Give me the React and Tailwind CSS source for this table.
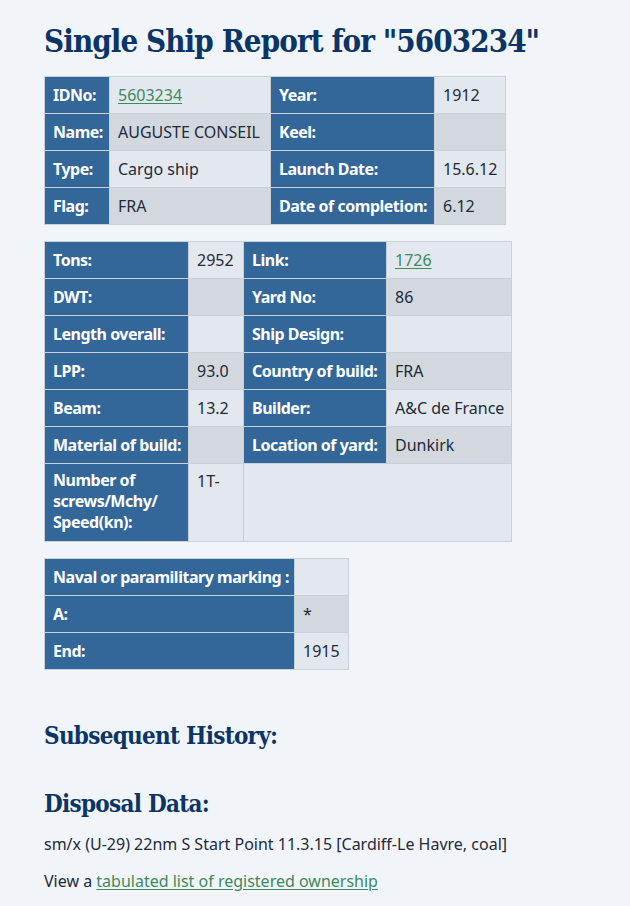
import React from "react";

const serif = { fontFamily: '"DejaVu Serif", serif', fontStretch: "condensed" };

function Th({ children, className = "" }) {
  return (
    <td className={`bg-[#336699] text-white font-bold tracking-[-0.03em] pl-2 pr-1 align-middle border border-[#c8d0da] whitespace-nowrap ${className}`}>
      {children}
    </td>
  );
}
function Td({ children, dark, className = "" }) {
  return (
    <td className={`${dark ? "bg-[#d3d8de]" : "bg-[#e3e8ee]"} text-[#1d2b3a] pl-2 pr-1 align-middle border border-[#c8d0da] whitespace-nowrap ${className}`}>
      {children}
    </td>
  );
}
const Link = ({ children }) => (
  <a href="#" className="text-[#3d8a5c] underline underline-offset-2">{children}</a>
);

export default function App() {
  return (
    <div className="min-h-[906px] bg-[#f1f4f8] px-[44px] pt-[21px] text-[16px] text-[#1d2b3a]" style={{ fontFamily: '"Noto Sans", sans-serif' }}>
      <h1 className="text-[31px] font-bold tracking-[-0.03em] text-[#0b3566] leading-[40px] mb-[15px] whitespace-nowrap" style={serif}>
        Single Ship Report for "5603234"
      </h1>

      <table className="table-fixed border-collapse border border-[#c8d0da] text-[16px] leading-[22px] [&_td]:h-[37px]">
        <tbody>
          <tr>
            <Th className="w-[65px]">IDNo:</Th>
            <Td className="w-[161px]"><Link>5603234</Link></Td>
            <Th className="w-[164px]">Year:</Th>
            <Td className="w-[71px]">1912</Td>
          </tr>
          <tr>
            <Th>Name:</Th>
            <Td dark>AUGUSTE CONSEIL</Td>
            <Th>Keel:</Th>
            <Td dark></Td>
          </tr>
          <tr>
            <Th>Type:</Th>
            <Td>Cargo ship</Td>
            <Th>Launch Date:</Th>
            <Td>15.6.12</Td>
          </tr>
          <tr>
            <Th>Flag:</Th>
            <Td dark>FRA</Td>
            <Th>Date of completion:</Th>
            <Td dark>6.12</Td>
          </tr>
        </tbody>
      </table>

      <table className="table-fixed mt-[16px] border-collapse border border-[#c8d0da] text-[16px] leading-[22px] [&_td]:h-[37px]">
        <tbody>
          <tr>
            <Th className="w-[144px]">Tons:</Th>
            <Td className="w-[55px]">2952</Td>
            <Th className="w-[143px]">Link:</Th>
            <Td className="w-[125px]"><Link>1726</Link></Td>
          </tr>
          <tr>
            <Th>DWT:</Th>
            <Td dark></Td>
            <Th>Yard No:</Th>
            <Td dark>86</Td>
          </tr>
          <tr>
            <Th>Length overall:</Th>
            <Td></Td>
            <Th>Ship Design:</Th>
            <Td></Td>
          </tr>
          <tr>
            <Th>LPP:</Th>
            <Td dark>93.0</Td>
            <Th>Country of build:</Th>
            <Td dark>FRA</Td>
          </tr>
          <tr>
            <Th>Beam:</Th>
            <Td>13.2</Td>
            <Th>Builder:</Th>
            <Td>A&amp;C de France</Td>
          </tr>
          <tr>
            <Th>Material of build:</Th>
            <Td dark></Td>
            <Th>Location of yard:</Th>
            <Td dark>Dunkirk</Td>
          </tr>
          <tr>
            <td className="bg-[#336699] text-white font-bold tracking-[-0.03em] pl-2 pr-1 pt-[6px] pb-[8px] align-top border border-[#c8d0da] leading-[21px] h-[76px]">
              Number of<br />screws/Mchy/<br />Speed(kn):
            </td>
            <td className="bg-[#e3e8ee] pl-2 pt-[6px] align-top border border-[#c8d0da]">1T-</td>
            <td colSpan={2} className="bg-[#e3e8ee] border border-[#c8d0da]"></td>
          </tr>
        </tbody>
      </table>

      <table className="table-fixed mt-[16px] border-collapse border border-[#c8d0da] text-[16px] leading-[22px] [&_td]:h-[37px]">
        <tbody>
          <tr>
            <Th className="w-[250px]">Naval or paramilitary marking :</Th>
            <Td className="w-[54px]"></Td>
          </tr>
          <tr>
            <Th>A:</Th>
            <Td dark>*</Td>
          </tr>
          <tr>
            <Th>End:</Th>
            <Td>1915</Td>
          </tr>
        </tbody>
      </table>

      <h2 className="mt-[50px] text-[24px] font-bold tracking-[-0.03em] text-[#0b3566] leading-[32px]" style={serif}>
        Subsequent History:
      </h2>
      <h2 className="mt-[36px] text-[24px] font-bold tracking-[-0.03em] text-[#0b3566] leading-[32px]" style={serif}>
        Disposal Data:
      </h2>
      <p className="mt-[12px] leading-[24px]">sm/x (U-29) 22nm S Start Point 11.3.15 [Cardiff-Le Havre, coal]</p>
      <p className="mt-[13px] leading-[24px]">View a <Link>tabulated list of registered ownership</Link></p>
    </div>
  );
}
